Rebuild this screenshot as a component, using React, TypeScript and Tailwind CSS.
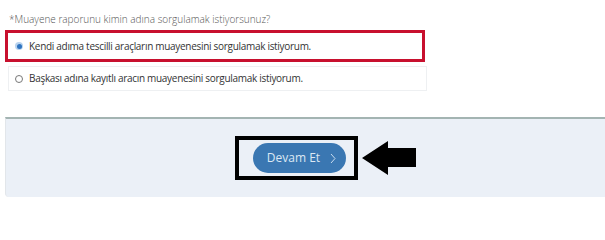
import React from 'react'

const options = [
  { id: 'kendi', label: 'Kendi adıma tescilli araçların muayenesini sorgulamak istiyorum.', checked: true },
  { id: 'baskasi', label: 'Başkası adına kayıtlı aracın muayenesini sorgulamak istiyorum.', checked: false },
]

const Radio: React.FC<{ checked: boolean }> = ({ checked }) =>
  checked ? (
    <span className="flex h-[8px] w-[8px] items-center justify-center rounded-full bg-[#b9d3ee]">
      <span className="h-[5px] w-[5px] rounded-full bg-[#2f74c0]" />
    </span>
  ) : (
    <span className="h-[8px] w-[8px] rounded-full border border-[#777]" />
  )

const App: React.FC = () => {
  return (
    <div className="h-[202px] w-[605px] overflow-hidden bg-white font-['Open_Sans',sans-serif]">
      <p className="pl-[9px] pt-[12px] text-[10px] leading-[14px] font-light text-[#555]">
        *Muayene raporunu kimin adına sorgulamak istiyorsunuz?
      </p>

      <div className="mt-[4px] flex w-[425px] flex-col">
        <label className="ml-[5px] flex h-[32px] items-center gap-[6px] border-[3px] border-[#c8102e] pl-[7px]">
          <Radio checked={options[0].checked} />
          <span className="text-[10px] tracking-[-0.3px] text-[#333]">{options[0].label}</span>
        </label>
        <label className="ml-[8px] mt-[4px] flex h-[25px] w-[419px] items-center gap-[6px] border border-[#eef0f2] pl-[6px]">
          <Radio checked={options[1].checked} />
          <span className="text-[10px] tracking-[-0.3px] text-[#333]">{options[1].label}</span>
        </label>
      </div>

      <div className="ml-[5px] mt-[26px] flex h-[80px] items-center rounded-bl-[4px] border-t-2 border-l border-[#a3b4b2] border-l-[#e2e6ea] bg-[#ebf0f7] pl-[229px]">
        <div className="flex h-[44px] w-[123px] items-center border-4 border-black pl-[14px]">
          <button className="flex h-[30px] w-[93px] items-center justify-center gap-[10px] rounded-full bg-[#3a77b2] pl-[4px] text-[12px] text-[#dce8f4]">
            <span>Devam Et</span>
            <svg width="6" height="11" viewBox="0 0 6 11" fill="none">
              <path d="M1 1l4 4.5L1 10" stroke="#c9dcef" strokeWidth="1" />
            </svg>
          </button>
        </div>
        <svg className="ml-[4px]" width="56" height="34" viewBox="0 0 56 34">
          <path d="M0 17L26 0V7H54V26H26V34Z" fill="#000" />
        </svg>
      </div>
    </div>
  )
}

export default App
